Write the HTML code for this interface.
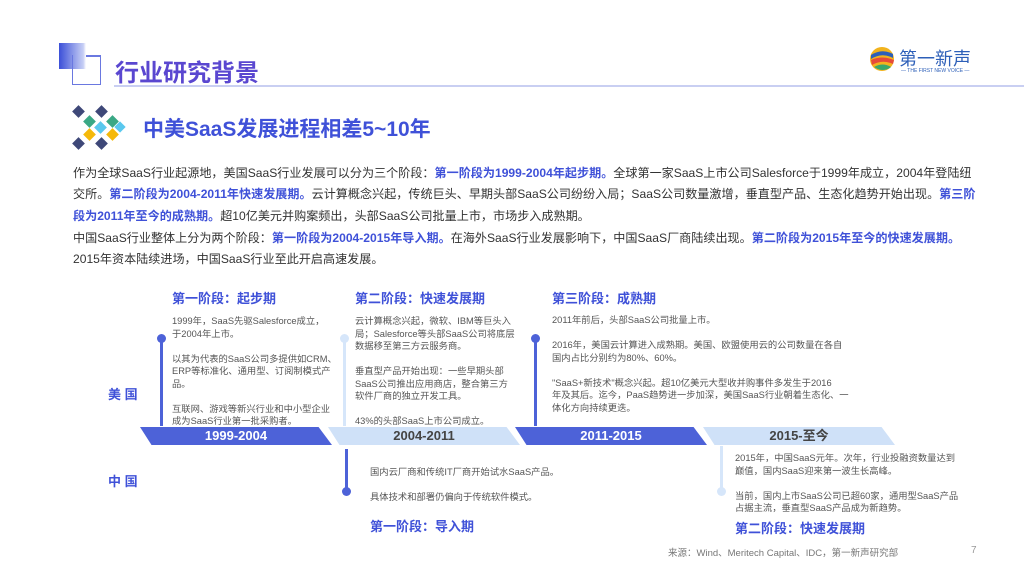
<!DOCTYPE html>
<html><head><meta charset="utf-8"><style>
*{margin:0;padding:0;box-sizing:border-box}
body{width:1024px;height:574px;background:#fff;position:relative;overflow:hidden;font-family:"Liberation Sans","Noto Sans CJK SC",sans-serif;color:#333}
.a{position:absolute;white-space:nowrap}
.b{color:#3f51d8;font-weight:bold}
.p{font-size:12.1px;line-height:21.5px;left:73px}
.s{font-size:9.3px;line-height:12.5px;color:#555}
.h{font-size:13px;font-weight:bold;color:#3f51d8}
.seg{position:absolute;top:427px;height:18px;clip-path:polygon(0 0,93% 0,100% 100%,6% 100%);font-size:13px;font-weight:bold;text-align:center;line-height:18px}
.d{background:#4d62d8;color:#fff}
.l{background:#cfe1f8;color:#444}
.vl{position:absolute;width:3px}
.dot{position:absolute;width:9px;height:9px;border-radius:50%}
</style></head><body>
<div class="a" style="left:59px;top:43px;width:27px;height:26px;background:linear-gradient(90deg,#3b4fd8,#c7cff5 90%,#fff)"></div>
<div class="a" style="left:72px;top:55px;width:29px;height:30px;border:1.5px solid #6a78e0;border-top:none"></div>
<div class="a" style="left:86px;top:55px;width:15px;height:1.5px;background:#6a78e0"></div>
<div class="a" style="left:115px;top:53px;font-size:24px;font-weight:bold;color:#5a47d0">行业研究背景</div>
<div class="a" style="left:114px;top:85px;width:910px;height:1.5px;background:#c9cff2"></div>
<svg class="a" style="left:869px;top:46px" width="26" height="26" viewBox="0 0 26 26"><circle cx="13" cy="13" r="12" fill="#f2b31d"/><path d="M2 9 Q13 2 24 8 L24 12 Q13 6 2 13Z" fill="#2d5fb8"/><path d="M2 14 Q13 9 25 14 L24 18 Q13 13 3 19Z" fill="#e64a3a"/><path d="M5 21 Q14 16 22 21 Q14 27 5 21Z" fill="#3aa86b"/></svg>
<div class="a" style="left:899px;top:45px;font-size:18px;color:#2d5fb8">第一新声</div>
<div class="a" style="left:901px;top:68px;font-size:5px;color:#2d5fb8">— THE FIRST NEW VOICE —</div>
<svg class="a" style="left:72px;top:104px" width="54" height="46" viewBox="0 0 54 46">
<rect x="2" y="3" width="9" height="9" fill="#3e4878" transform="rotate(45 6.5 7.5)"/><rect x="25" y="3" width="9" height="9" fill="#3e4878" transform="rotate(45 29.5 7.5)"/>
<rect x="13" y="13" width="9" height="9" fill="#3aa885" transform="rotate(45 17.5 17.5)"/><rect x="36" y="13" width="9" height="9" fill="#3aa885" transform="rotate(45 40.5 17.5)"/>
<rect x="24" y="19" width="9" height="9" fill="#5ac8ee" transform="rotate(45 28.5 23.5)"/><rect x="44" y="19" width="8" height="8" fill="#5ac8ee" transform="rotate(45 48 23)"/>
<rect x="13" y="26" width="9" height="9" fill="#f5b90a" transform="rotate(45 17.5 30.5)"/><rect x="36" y="26" width="9" height="9" fill="#f5b90a" transform="rotate(45 40.5 30.5)"/>
<rect x="2" y="35" width="9" height="9" fill="#3e4878" transform="rotate(45 6.5 39.5)"/><rect x="25" y="35" width="9" height="9" fill="#3e4878" transform="rotate(45 29.5 39.5)"/></svg>
<div class="a" style="left:143px;top:113px;font-size:21px;font-weight:bold;color:#3f51d8">中美SaaS发展进程相差5~10年</div>
<div class="a p" style="top:163px">作为全球SaaS行业起源地，美国SaaS行业发展可以分为三个阶段：<span class="b">第一阶段为1999-2004年起步期。</span>全球第一家SaaS上市公司Salesforce于1999年成立，2004年登陆纽</div>
<div class="a p" style="top:184px">交所。<span class="b">第二阶段为2004-2011年快速发展期。</span>云计算概念兴起，传统巨头、早期头部SaaS公司纷纷入局；SaaS公司数量激增，垂直型产品、生态化趋势开始出现。<span class="b">第三阶</span></div>
<div class="a p" style="top:206px"><span class="b">段为2011年至今的成熟期。</span>超10亿美元并购案频出，头部SaaS公司批量上市，市场步入成熟期。</div>
<div class="a p" style="top:228px">中国SaaS行业整体上分为两个阶段：<span class="b">第一阶段为2004-2015年导入期。</span>在海外SaaS行业发展影响下，中国SaaS厂商陆续出现。<span class="b">第二阶段为2015年至今的快速发展期。</span></div>
<div class="a p" style="top:249px">2015年资本陆续进场，中国SaaS行业至此开启高速发展。</div>

<div class="a h" style="left:172px;top:288px">第一阶段：起步期</div>
<div class="a h" style="left:355px;top:288px">第二阶段：快速发展期</div>
<div class="a h" style="left:552px;top:288px">第三阶段：成熟期</div>
<div class="a s" style="left:172px;top:315px">1999年，SaaS先驱Salesforce成立，<br>于2004年上市。<br><br>以其为代表的SaaS公司多提供如CRM、<br>ERP等标准化、通用型、订阅制模式产<br>品。<br><br>互联网、游戏等新兴行业和中小型企业<br>成为SaaS行业第一批采购者。</div>
<div class="a s" style="left:355px;top:315px">云计算概念兴起，微软、IBM等巨头入<br>局；Salesforce等头部SaaS公司将底层<br>数据移至第三方云服务商。<br><br>垂直型产品开始出现：一些早期头部<br>SaaS公司推出应用商店，整合第三方<br>软件厂商的独立开发工具。<br><br>43%的头部SaaS上市公司成立。</div>
<div class="a s" style="left:552px;top:314px">2011年前后，头部SaaS公司批量上市。<br><br>2016年，美国云计算进入成熟期。美国、欧盟使用云的公司数量在各自<br>国内占比分别约为80%、60%。<br><br>"SaaS+新技术"概念兴起。超10亿美元大型收并购事件多发生于2016<br>年及其后。迄今，PaaS趋势进一步加深，美国SaaS行业朝着生态化、一<br>体化方向持续更迭。</div>

<div class="vl" style="left:160px;top:338px;height:88px;background:#4d62d8"></div><div class="dot" style="left:157px;top:334px;background:#4d62d8"></div>
<div class="vl" style="left:343px;top:338px;height:88px;background:#d6e6fa"></div><div class="dot" style="left:340px;top:334px;background:#d6e6fa"></div>
<div class="vl" style="left:534px;top:338px;height:88px;background:#4d62d8"></div><div class="dot" style="left:531px;top:334px;background:#4d62d8"></div>

<div class="a" style="left:108px;top:384px;font-size:13px;font-weight:bold;color:#3f51d8">美 国</div>
<div class="a" style="left:108px;top:471px;font-size:13px;font-weight:bold;color:#3f51d8">中 国</div>

<div class="seg d" style="left:140px;width:192px">1999-2004</div>
<div class="seg l" style="left:328px;width:192px">2004-2011</div>
<div class="seg d" style="left:515px;width:192px">2011-2015</div>
<div class="seg l" style="left:703px;width:192px">2015-至今</div>

<div class="vl" style="left:345px;top:449px;height:40px;background:#4d62d8"></div><div class="dot" style="left:342px;top:487px;background:#4d62d8"></div>
<div class="vl" style="left:720px;top:446px;height:44px;background:#d6e6fa"></div><div class="dot" style="left:717px;top:487px;background:#d6e6fa"></div>
<div class="a s" style="left:370px;top:466px">国内云厂商和传统IT厂商开始试水SaaS产品。<br><br>具体技术和部署仍偏向于传统软件模式。</div>
<div class="a h" style="left:370px;top:516px">第一阶段：导入期</div>
<div class="a s" style="left:735px;top:452px">2015年，中国SaaS元年。次年，行业投融资数量达到<br>巅值，国内SaaS迎来第一波生长高峰。<br><br>当前，国内上市SaaS公司已超60家，通用型SaaS产品<br>占据主流，垂直型SaaS产品成为新趋势。</div>
<div class="a h" style="left:735px;top:518px">第二阶段：快速发展期</div>
<div class="a" style="left:668px;top:545px;font-size:9.5px;color:#777">来源：Wind、Meritech Capital、IDC，第一新声研究部</div>
<div class="a" style="left:971px;top:545px;font-size:10px;color:#999">7</div>
</body></html>
